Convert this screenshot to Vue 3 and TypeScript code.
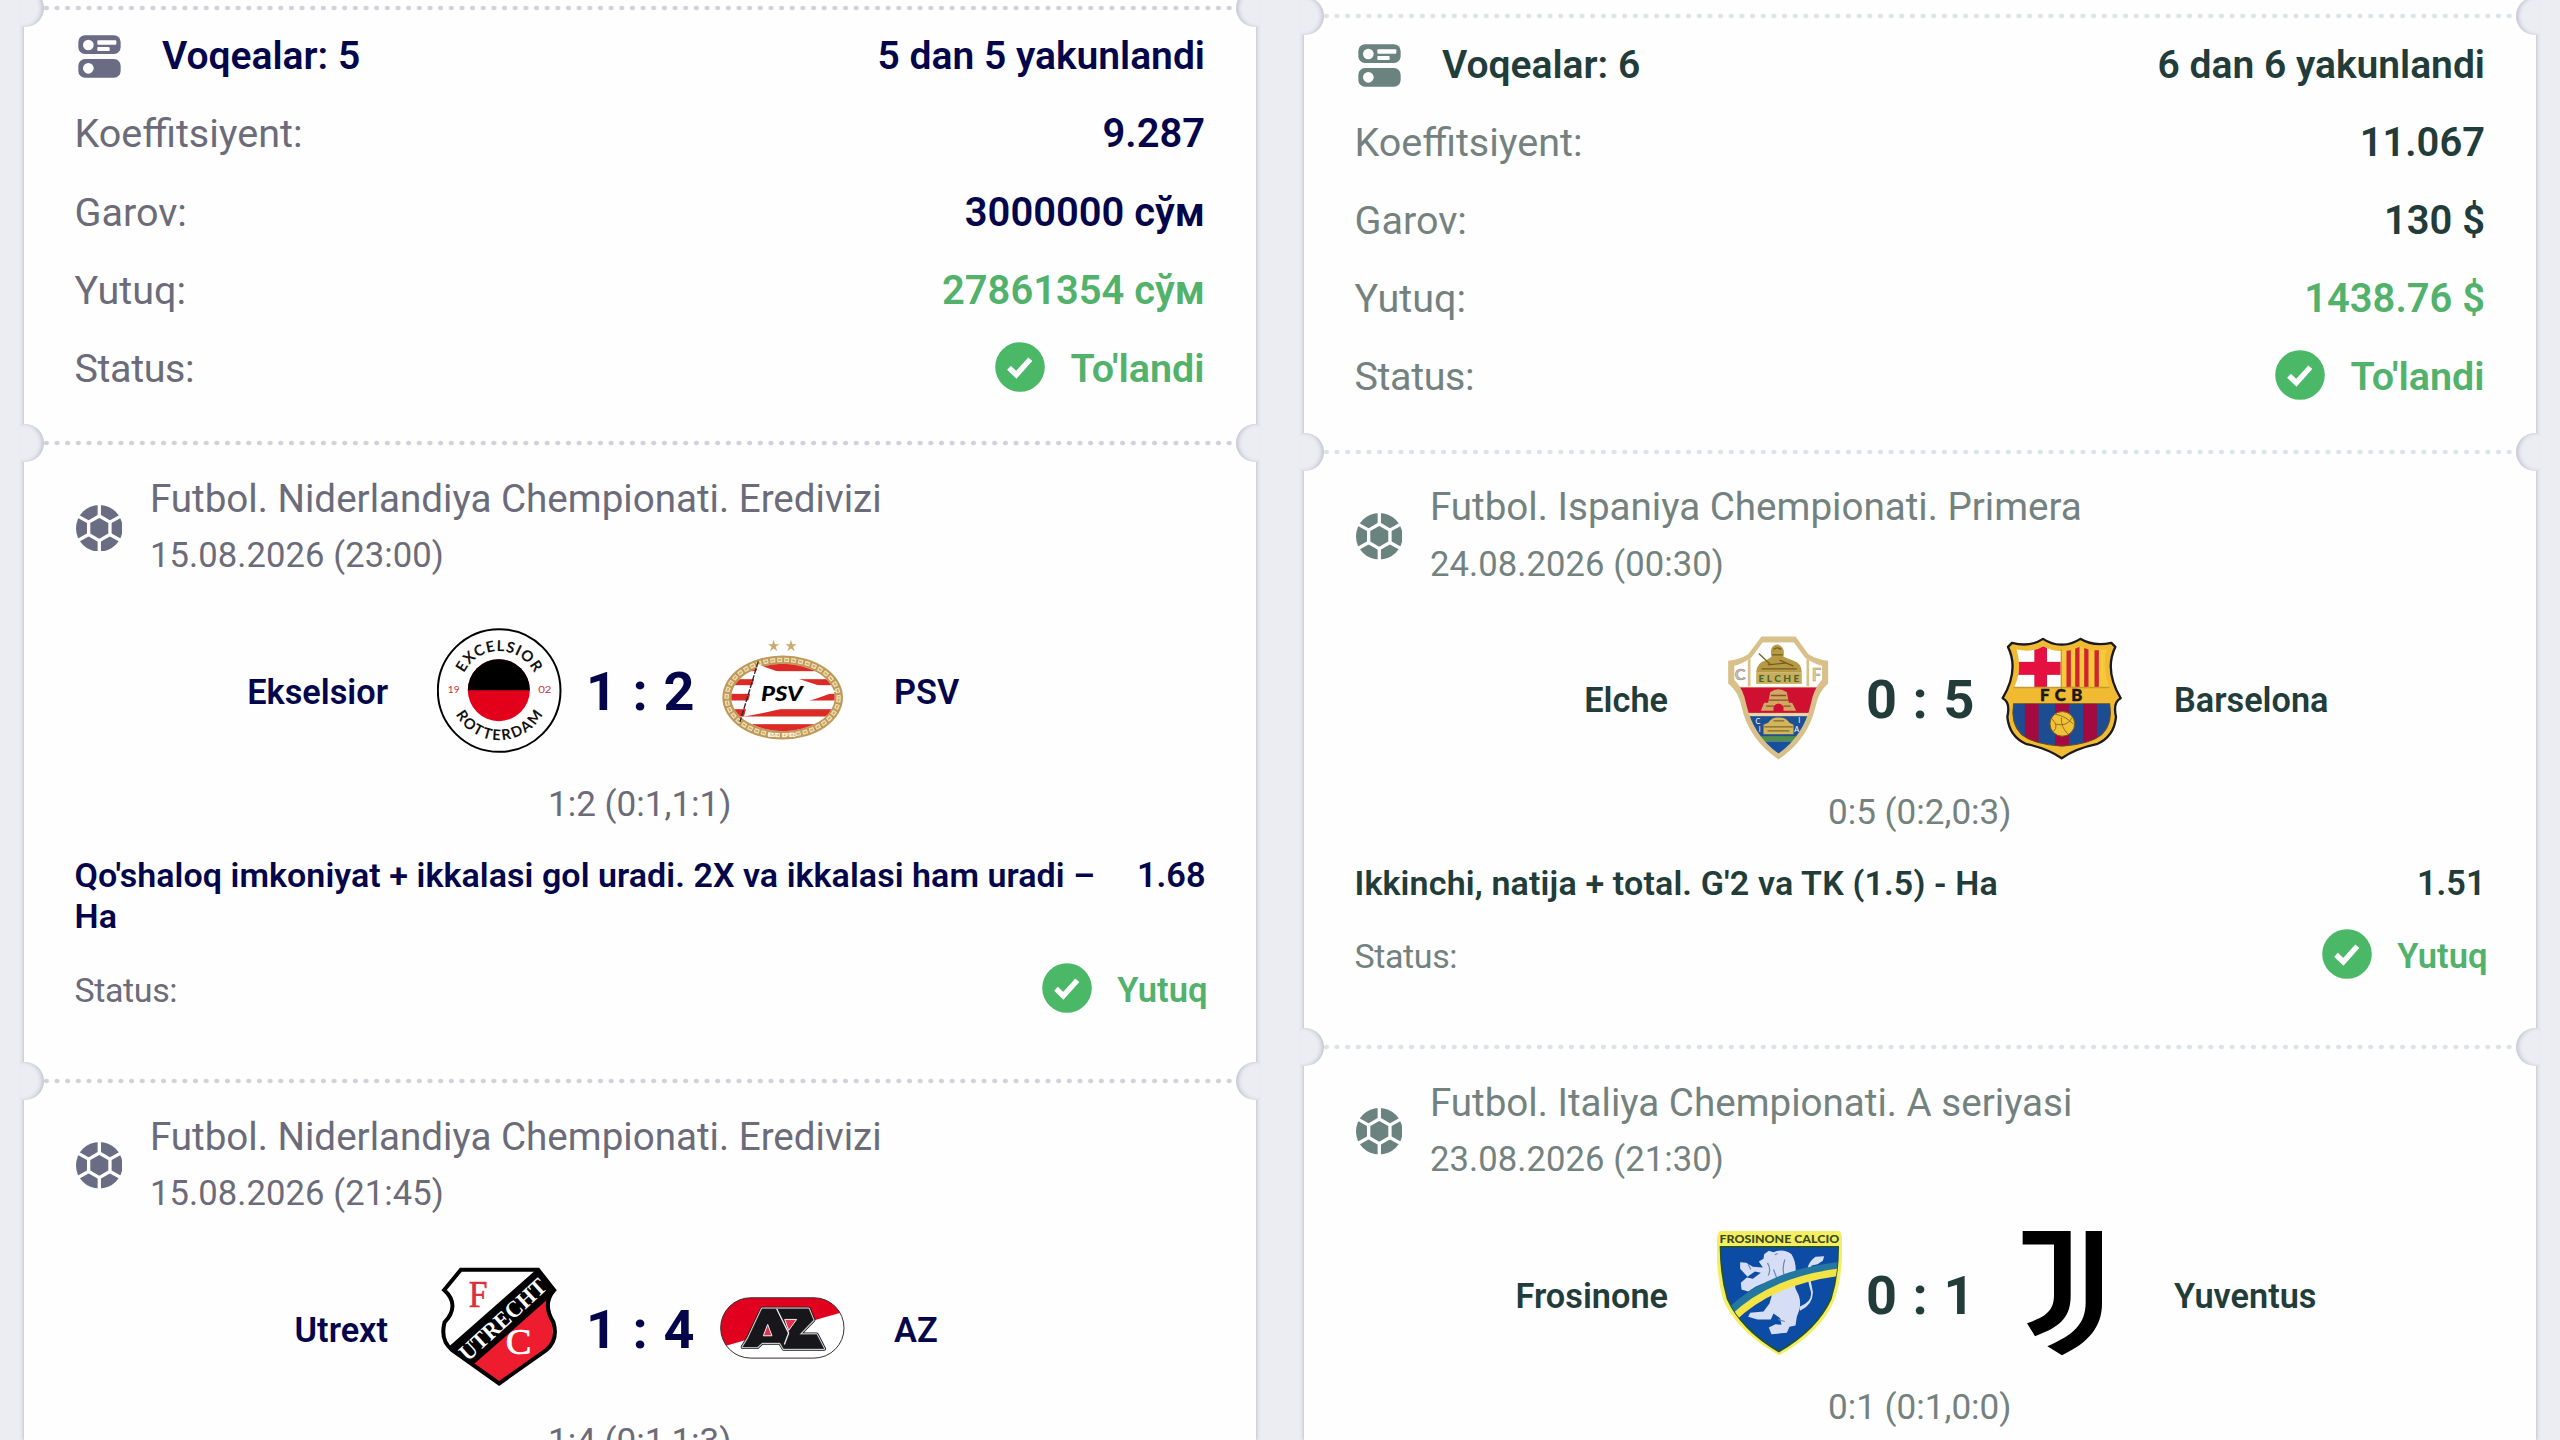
<script setup lang="ts">
type Crest = 'excelsior' | 'psv' | 'utrecht' | 'az' | 'elche' | 'barcelona' | 'frosinone' | 'juventus'

interface Team {
  name: string
  crest: Crest
}

interface Bet {
  league: string
  date: string
  home: Team
  away: Team
  score: string
  periods: string
  market: string
  odds: string
}

interface Slip {
  theme: 'navy' | 'pine'
  count: string
  finished: string
  coefficient: string
  stake: string
  payout: string
  bets: Bet[]
}

const slips: Slip[] = [
  {
    theme: 'navy',
    count: 'Voqealar: 5',
    finished: '5 dan 5 yakunlandi',
    coefficient: '9.287',
    stake: '3000000 сўм',
    payout: '27861354 сўм',
    bets: [
      {
        league: 'Futbol. Niderlandiya Chempionati. Eredivizi',
        date: '15.08.2026 (23:00)',
        home: { name: 'Ekselsior', crest: 'excelsior' },
        away: { name: 'PSV', crest: 'psv' },
        score: '1 : 2',
        periods: '1:2 (0:1,1:1)',
        market: "Qo'shaloq imkoniyat + ikkalasi gol uradi. 2X va ikkalasi ham uradi – Ha",
        odds: '1.68',
      },
      {
        league: 'Futbol. Niderlandiya Chempionati. Eredivizi',
        date: '15.08.2026 (21:45)',
        home: { name: 'Utrext', crest: 'utrecht' },
        away: { name: 'AZ', crest: 'az' },
        score: '1 : 4',
        periods: '1:4 (0:1,1:3)',
        market: '',
        odds: '',
      },
    ],
  },
  {
    theme: 'pine',
    count: 'Voqealar: 6',
    finished: '6 dan 6 yakunlandi',
    coefficient: '11.067',
    stake: '130 $',
    payout: '1438.76 $',
    bets: [
      {
        league: 'Futbol. Ispaniya Chempionati. Primera',
        date: '24.08.2026 (00:30)',
        home: { name: 'Elche', crest: 'elche' },
        away: { name: 'Barselona', crest: 'barcelona' },
        score: '0 : 5',
        periods: '0:5 (0:2,0:3)',
        market: "Ikkinchi, natija + total. G'2 va TK (1.5) - Ha",
        odds: '1.51',
      },
      {
        league: 'Futbol. Italiya Chempionati. A seriyasi',
        date: '23.08.2026 (21:30)',
        home: { name: 'Frosinone', crest: 'frosinone' },
        away: { name: 'Yuventus', crest: 'juventus' },
        score: '0 : 1',
        periods: '0:1 (0:1,0:0)',
        market: '',
        odds: '',
      },
    ],
  },
]

const crestBox: Record<Crest, string> = {
  excelsior: '52.5 52.5 375 375',
  psv: '900 52.5 375 375',
  utrecht: '52.5 77.7 375 375',
  az: '900 77.7 375 375',
  elche: '52.5 77.4 375 375',
  barcelona: '900 77.4 375 375',
  frosinone: '82.5 64.5 375 375',
  juventus: '930 64.5 375 375',
}
</script>

<template>
  <main class="page">
    <section v-for="slip in slips" :key="slip.theme" class="column" :class="slip.theme">
      <div class="card">
        <div class="stub"></div>
        <div class="divider"><i class="notch left"></i><i class="notch right"></i></div>

        <div class="summary">
          <div class="row head">
            <span class="head-title">
              <svg class="events-icon" viewBox="174 131 129 129">
                <rect x="175" y="132" width="127" height="56" rx="20" fill="currentColor" />
                <rect x="175" y="203" width="127" height="56" rx="20" fill="currentColor" />
                <circle cx="205" cy="161" r="16" fill="#fff" />
                <circle cx="205" cy="231" r="16" fill="#fff" />
                <rect x="232" y="147" width="57" height="13" rx="3" fill="#fff" />
                <rect x="232" y="167" width="37" height="12" rx="3" fill="#fff" />
              </svg>
              <b>{{ slip.count }}</b>
            </span>
            <b>{{ slip.finished }}</b>
          </div>
          <div class="row"><span class="label">Koeffitsiyent:</span><b class="value">{{ slip.coefficient }}</b></div>
          <div class="row"><span class="label">Garov:</span><b class="value">{{ slip.stake }}</b></div>
          <div class="row"><span class="label">Yutuq:</span><b class="value won">{{ slip.payout }}</b></div>
          <div class="row">
            <span class="label status">Status:</span>
            <b class="won badge">
              <svg class="check" viewBox="0 0 50 50">
                <circle cx="25" cy="25" r="24.8" fill="currentColor" />
                <path d="M14 25.8 21.3 32.8 35.3 17.2" fill="none" stroke="#fff" stroke-width="5.4" />
              </svg>
              To'landi
            </b>
          </div>
        </div>

        <template v-for="bet in slip.bets" :key="bet.date">
          <div class="divider"><i class="notch left"></i><i class="notch right"></i></div>
          <article class="bet">
            <header class="league">
              <svg class="ball" viewBox="229 254 140 140">
                <circle cx="299" cy="324" r="70" fill="currentColor" />
                <g fill="none" stroke="#fff" stroke-width="10">
                  <path d="M299 287 331 305.5V342.5L299 361 267 342.5V305.5Z" />
                  <path d="M299 287V250M331 305.5 366 286M331 342.5 366 362M299 361V398M267 342.5 232 362M267 305.5 232 286" />
                </g>
              </svg>
              <div>
                <div class="league-name">{{ bet.league }}</div>
                <div class="date">{{ bet.date }}</div>
              </div>
            </header>

            <div class="match">
              <b class="team home">{{ bet.home.name }}</b>
              <template v-for="(team, side) in [bet.home, bet.away]" :key="team.name">
                <b v-if="side === 1" class="score">{{ bet.score }}</b>
                <svg class="crest" :viewBox="crestBox[team.crest]">
                  <g v-if="team.crest === 'excelsior'" class="sans">
                    <defs>
                      <path id="arc-top" d="M121 240A118 118 0 0 1 357 240" />
                      <path id="arc-bottom" d="M90 240A149 149 0 0 0 388 240" />
                    </defs>
                    <circle cx="239" cy="240" r="184" fill="#fff" stroke="#000" stroke-width="6" />
                    <circle cx="238" cy="239" r="93" fill="#e2001a" />
                    <path d="M145 239A93 93 0 0 1 331 239Z" fill="#000" />
                    <text font-size="45" font-weight="700" fill="#111">
                      <textPath href="#arc-top" startOffset="50%" text-anchor="middle" textLength="262">EXCELSIOR</textPath>
                    </text>
                    <text font-size="44" font-weight="700" fill="#111">
                      <textPath href="#arc-bottom" startOffset="50%" text-anchor="middle" textLength="318">ROTTERDAM</textPath>
                    </text>
                    <text x="85" y="248" font-size="27" fill="#c8323c" textLength="35" lengthAdjust="spacingAndGlyphs">19</text>
                    <text x="356" y="248" font-size="27" fill="#c8323c" textLength="40" lengthAdjust="spacingAndGlyphs">02</text>
                  </g>

                  <g v-else-if="team.crest === 'psv'" class="sans">
                    <defs>
                      <clipPath id="psv-oval"><ellipse cx="1089" cy="261" rx="155" ry="101" /></clipPath>
                    </defs>
                    <g fill="#c9ab6c">
                      <path d="M1061 88 1065 101 1078 101 1067 109 1072 122 1061 114 1050 122 1055 109 1044 101 1057 101Z" />
                      <path d="M1113 88 1117 101 1130 101 1119 109 1124 122 1113 114 1102 122 1107 109 1096 101 1109 101Z" />
                    </g>
                    <ellipse cx="1088" cy="261" rx="181" ry="126" fill="#bd9a58" />
                    <ellipse cx="1088" cy="261" rx="168" ry="113" fill="none" stroke="#f0dfb8" stroke-width="13" stroke-dasharray="15 6" />
                    <ellipse cx="1088" cy="261" rx="168" ry="113" fill="none" stroke="#c9a763" stroke-width="5" stroke-dasharray="9 12" stroke-dashoffset="-3" />
                    <ellipse cx="1089" cy="261" rx="155" ry="101" fill="#fff" />
                    <g clip-path="url(#psv-oval)" fill="#dc2a26">
                      <rect x="930" y="158" width="320" height="24" />
                      <rect x="930" y="206" width="320" height="18" />
                      <rect x="930" y="250" width="320" height="20" />
                      <rect x="930" y="296" width="320" height="22" />
                      <rect x="930" y="341" width="320" height="24" />
                    </g>
                    <path d="M1014 162Q1130 205 1250 242Q1110 296 972 318Z" fill="#fff" />
                    <path d="M1015 152 960 334" stroke="#3a2424" stroke-width="4" stroke-dasharray="18 4" />
                    <text x="1023" y="270" font-size="61" font-weight="900" font-style="italic" textLength="125" lengthAdjust="spacingAndGlyphs">PSV</text>
                    <text x="1044" y="380" font-size="19" font-weight="700" fill="#fff" textLength="84">EST. 1913</text>
                  </g>

                  <g v-else-if="team.crest === 'utrecht'">
                    <defs>
                      <clipPath id="utrecht-shield">
                        <path d="M124 91H356L406 153C378 182 386 215 402 250C412 285 405 312 380 333L239 434 98 333C72 312 66 285 75 250C104 215 106 182 72 153Z" />
                      </clipPath>
                    </defs>
                    <path d="M124 91H356L406 153C378 182 380 215 402 250C412 285 405 312 380 333L239 434 98 333C72 312 66 285 75 250C108 215 106 182 72 153Z" fill="#fff" />
                    <g clip-path="url(#utrecht-shield)">
                      <path d="M160 370 400 160V440H160Z" fill="#ed1c2e" />
                      <path d="M85 325 352 90 425 145 160 378Z" fill="#000" />
                    </g>
                    <path d="M124 92H356L404 153C378 182 380 215 402 250C412 285 405 312 380 333L239 433 98 333C72 312 66 285 75 250C108 215 106 182 74 153Z" fill="none" stroke="#000" stroke-width="12" />
                    <text class="serif" x="148" y="204" font-size="116" fill="#d9303c" stroke="#d9303c" stroke-width="2" textLength="56" lengthAdjust="spacingAndGlyphs">F</text>
                    <text class="serif" x="259" y="346" font-size="110" fill="#fff" stroke="#fff" stroke-width="2" textLength="77" lengthAdjust="spacingAndGlyphs">C</text>
                    <text class="serif" transform="translate(145 369) rotate(-42.5)" font-size="70" font-weight="700" fill="#fff" textLength="328" lengthAdjust="spacingAndGlyphs">UTRECHT</text>
                  </g>

                  <g v-else-if="team.crest === 'az'" class="sans">
                    <defs>
                      <clipPath id="az-pill"><rect x="902" y="176" width="370" height="181" rx="90" /></clipPath>
                    </defs>
                    <rect x="902" y="176" width="370" height="181" rx="90" fill="#fff" />
                    <path d="M900 325 1275 217V170H900Z" fill="#e2001f" clip-path="url(#az-pill)" />
                    <rect x="902" y="176" width="370" height="181" rx="90" fill="none" stroke="#3a3032" stroke-width="3" />
                    <g stroke-linejoin="round">
                      <path
                        v-for="pass in 3"
                        :key="pass"
                        d="M1026 209H1166L1180 243 1138 286H1190L1212 329H1091L1080 311H1026L1012 324H968L984 298Z"
                        fill="#17171b"
                        :stroke="['#17171b', '#ddd', '#17171b'][pass - 1]"
                        :stroke-width="[12, 7, 1][pass - 1]"
                      />
                      <path d="M1043 256 1030 290H1056Z" fill="#e5324a" stroke="#eee" stroke-width="3" />
                      <path d="M1094 241H1130L1106 274Z" fill="#e5324a" stroke="#eee" stroke-width="3" />
                      <path d="M1070 209 1106 282 1093 316" fill="none" stroke="#eee" stroke-width="4" />
                    </g>
                  </g>

                  <g v-else-if="team.crest === 'elche'" class="sans">
                    <defs>
                      <clipPath id="elche-shield">
                        <path d="M190 96H283L316 142Q345 162 368 167V208Q342 236 333 285Q312 376 237 430Q162 376 141 285Q132 236 104 208V167Q127 162 156 142Z" />
                      </clipPath>
                    </defs>
                    <path d="M186 79H288L327 132Q352 148 386 152V220Q356 246 348 290Q326 388 237 448Q148 388 126 290Q118 246 86 220V152Q120 148 146 132Z" fill="#d9c08a" />
                    <g clip-path="url(#elche-shield)">
                      <rect x="90" y="80" width="300" height="150" fill="#fff" />
                      <rect x="90" y="232" width="300" height="76" fill="#cf1030" />
                      <rect x="90" y="309" width="300" height="9" fill="#e9d7ac" />
                      <rect x="90" y="318" width="300" height="62" fill="#1d4f94" />
                      <rect x="90" y="378" width="300" height="16" fill="#4f8f4a" />
                      <rect x="90" y="394" width="300" height="60" fill="#174fa0" />
                      <path d="M149 138V228M325 138V228" stroke="#d9c08a" stroke-width="8" />
                    </g>
                    <path d="M170 186Q172 156 200 150L216 140Q208 106 233 103Q258 106 252 140L282 152Q305 158 307 186Z" fill="#b89a45" />
                    <path d="M178 130 212 162M222 118Q233 108 245 118M218 134H250M205 164 262 158M186 176H292M240 150 282 168" stroke="#6f6022" stroke-width="4" fill="none" />
                    <rect x="170" y="186" width="137" height="35" fill="#c9ad5d" />
                    <text x="177" y="215" font-size="30" font-weight="900" fill="#3f6a2c" textLength="122">ELCHE</text>
                    <text x="106" y="210" font-size="48" font-weight="700" fill="#d2c6bb" stroke="#8f8076" stroke-width="1.5" textLength="32" lengthAdjust="spacingAndGlyphs">C</text>
                    <text x="337" y="213" font-size="50" font-weight="700" fill="#e0cfa4" stroke="#a0906c" stroke-width="1.5">F</text>
                    <path d="M184 302 194 278H206L212 246Q236 228 262 246L268 278H278L290 302H252V288Q237 272 222 288V302Z" fill="#d0a862" />
                    <path d="M214 256H260M208 270H266M200 288H222M252 288H274" stroke="#8f4a30" stroke-width="4" />
                    <path d="M192 372V344L206 338Q218 320 237 322Q258 320 270 338L282 344V372Z" fill="#d4b45c" />
                    <path d="M194 350H280M204 362H270M222 332H254" stroke="#7a6a2c" stroke-width="3.5" />
                    <text x="168" y="340" font-size="22" fill="#fff">C</text>
                    <text x="178" y="364" font-size="20" fill="#fff">I</text>
                    <text x="296" y="338" font-size="22" fill="#fff">I</text>
                    <text x="284" y="364" font-size="22" fill="#fff">A</text>
                  </g>

                  <g v-else-if="team.crest === 'barcelona'" class="sans">
                    <defs>
                      <clipPath id="barca-top">
                        <path d="M950 118Q1000 128 1030 108Q1058 124 1085 122Q1112 124 1142 108Q1170 126 1220 118Q1206 170 1228 232H942Q968 180 950 118Z" />
                      </clipPath>
                      <clipPath id="barca-bottom">
                        <path d="M941 280H1229Q1240 340 1205 374Q1170 402 1085 408Q1000 402 965 374Q930 340 941 280Z" />
                      </clipPath>
                    </defs>
                    <path d="M936 98Q990 112 1029 86Q1056 104 1085 103Q1114 104 1141 86Q1180 110 1234 98L1246 110Q1212 180 1262 264Q1238 276 1248 320Q1242 380 1190 402Q1130 414 1085 444Q1040 414 980 402Q928 380 922 320Q932 276 908 264Q958 180 924 110Z"
                      fill="#f0bb33" stroke="#1c1a1a" stroke-width="7" stroke-linejoin="round" />
                    <g clip-path="url(#barca-top)">
                      <rect x="940" y="100" width="145" height="132" fill="#fff" />
                      <rect x="1003" y="100" width="38" height="132" fill="#e4103f" />
                      <rect x="940" y="155" width="142" height="39" fill="#e4103f" />
                      <rect x="1084" y="100" width="150" height="132" fill="#f6c83c" />
                      <path d="M1106 100V232M1132 100V232M1159 100V232M1190 100V232" stroke="#d0252f" stroke-width="13" />
                    </g>
                    <path d="M1084 118V232M941 232H1228" stroke="#c79a2c" stroke-width="4" />
                    <path d="M940 281H1230" stroke="#54401c" stroke-width="3" />
                    <g clip-path="url(#barca-bottom)">
                      <rect x="930" y="280" width="310" height="135" fill="#1d4c93" />
                      <path d="M995 280V415M1086 280V415M1170 280V415" stroke="#a4093f" stroke-width="41" />
                    </g>
                    <path d="M941 280Q930 340 965 374Q1000 402 1085 408Q1170 402 1205 374Q1240 340 1229 280" fill="none" stroke="#6b4c1a" stroke-width="3" />
                    <circle cx="1087" cy="341" r="37" fill="#efc239" stroke="#7e5c18" stroke-width="3" />
                    <path d="M1056 326Q1078 348 1060 364M1066 312Q1098 318 1120 342M1084 322Q1082 350 1104 372M1116 322Q1104 350 1066 342" fill="none" stroke="#86631c" stroke-width="2.5" />
                    <text x="1020" y="271" font-size="50" font-weight="900" fill="#1c1818" stroke="#1c1818" stroke-width="1.5" textLength="127">FCB</text>
                  </g>

                  <g v-else-if="team.crest === 'frosinone'" class="sans">
                    <defs>
                      <clipPath id="frosinone-shield">
                        <path d="M93 112H446Q446 200 424 268Q382 360 268 426Q156 360 114 268Q94 200 93 112Z" />
                      </clipPath>
                    </defs>
                    <path d="M104 58H434Q462 62 458 100Q460 210 432 278Q390 370 269 437Q148 370 104 278Q80 210 82 100Q80 62 104 58Z" fill="#f4ee62" />
                    <path d="M93 112H446Q446 200 424 268Q382 360 268 426Q156 360 114 268Q94 200 93 112Z" fill="#0d4ca5" stroke="#25532d" stroke-width="5" />
                    <path d="M252 128Q282 116 306 134Q322 160 318 196Q312 230 322 246Q336 268 330 300L322 322 318 348 300 352 292 370 246 374 238 354 258 344 276 346 272 326 252 312 244 330 204 330 176 322 182 310 222 306 240 282 252 240 220 222 198 232 176 246 156 240 154 220 172 204 190 208 214 190 196 186 174 202 152 178 152 158 170 160 190 172 220 174 208 156 222 148 224 134 238 124Z" fill="#d5def5" />
                    <path d="M330 292Q370 276 364 246Q352 206 354 178Q356 158 378 142L404 140 400 154 384 164 366 168 362 206 370 246Q372 284 332 304Z" fill="#d5def5" />
                    <path d="M256 136 264 132M234 160Q246 180 236 198M286 150Q276 180 286 202M252 180 262 206M176 164 184 180M266 330 286 336" fill="none" stroke="#7083ae" stroke-width="3.5" />
                    <g clip-path="url(#frosinone-shield)" fill="none">
                      <path d="M120 308Q240 190 460 168" stroke="#2478a0" stroke-width="24" />
                      <path d="M128 328Q250 210 460 187" stroke="#f4e345" stroke-width="22" />
                    </g>
                    <text x="90" y="101" font-size="35" font-weight="900" fill="#3c4b22" textLength="359" lengthAdjust="spacingAndGlyphs">FROSINONE CALCIO</text>
                  </g>

                  <g v-else fill="#000">
                    <path d="M998 63H1142V258C1142 318 1118 350 1035 380L1011 341C1070 322 1092 302 1092 256V105H998Z" />
                    <path d="M1187 63H1236V282C1236 352 1196 400 1116 437L1072 410C1150 376 1187 344 1187 278Z" />
                  </g>
                </svg>
              </template>
              <b class="team away">{{ bet.away.name }}</b>
            </div>

            <div class="periods">{{ bet.periods }}</div>

            <template v-if="bet.market">
              <div class="market">
                <b class="market-name">{{ bet.market }}</b>
                <b class="odds">{{ bet.odds }}</b>
              </div>
              <div class="result">
                <span class="status">Status:</span>
                <b class="won badge">
                  <svg class="check" viewBox="0 0 50 50">
                    <circle cx="25" cy="25" r="24.8" fill="currentColor" />
                    <path d="M14 25.8 21.3 32.8 35.3 17.2" fill="none" stroke="#fff" stroke-width="5.4" />
                  </svg>
                  Yutuq
                </b>
              </div>
            </template>
          </article>
        </template>
      </div>
    </section>
  </main>
</template>

<style>
body {
  overflow: hidden;
  background: #ebedf3;
}
</style>

<style scoped>
.page {
  display: flex;
  height: 1440px;
  overflow: hidden;
  background: #ebedf3;
  font-family: Roboto, "Liberation Sans", sans-serif;
}

.column {
  box-sizing: border-box;
  width: 1280px;
  height: 1440px;
  padding: 0 24px;
}

.navy {
  --strong: #04054a;
  --muted: #6b6b79;
  --icon: #6a6c84;
  --dot: #d0d1db;
  --won: #52b26c;
  --lead: 7.7px;
}

.pine {
  --strong: #223c3a;
  --muted: #74827f;
  --icon: #6b837e;
  --dot: #dbe3e6;
  --won: #52b26c;
  --lead: 16px;
}

.card {
  height: 1440px;
  background: #fefefe;
  box-shadow: 0 0 4px rgba(70, 72, 90, 0.42);
  color: var(--strong);
}

b {
  font-weight: 600;
}

.stub {
  height: var(--lead);
}

.divider {
  position: relative;
  height: 6px;
  margin: -3px 17px -3px;
  background: radial-gradient(ellipse 3px 2.7px at 50% 50%, var(--dot) 70%, transparent 100%) 0 0 / 10.667px 6px repeat-x;
}

.notch {
  position: absolute;
  top: -16px;
  width: 24px;
  height: 38px;
  background: #ebedf3;
}

.notch.left {
  left: -21px;
  border-radius: 0 19px 19px 0;
  box-shadow: inset -3px 0 4px -1px rgba(80, 80, 100, 0.28);
}

.notch.right {
  right: -21px;
  border-radius: 19px 0 0 19px;
  box-shadow: inset 3px 0 4px -1px rgba(80, 80, 100, 0.28);
}

.summary {
  padding: 9.5px 51px 35.1px 50.5px;
}

.row {
  display: flex;
  align-items: center;
  justify-content: space-between;
  height: 78.2px;
  font-size: 39.5px;
  line-height: 52px;
}

.head {
  font-size: 39px;
}

.head-title {
  display: flex;
  align-items: center;
  gap: 41px;
  padding-left: 3.5px;
}

.events-icon {
  width: 43px;
  height: 43px;
  margin-top: 1px;
  color: var(--icon);
}

.label,
.result {
  color: var(--muted);
}

.status {
  letter-spacing: -0.4px;
}

.value {
  font-size: 39.9px;
  line-height: 54px;
}

.won {
  color: var(--won);
}

.badge {
  display: flex;
  align-items: center;
  gap: 25px;
}

.row .badge {
  margin-right: 0.5px;
}

.check {
  width: 50px;
  height: 50px;
  margin-top: -5px;
  color: #4bb868;
}

.bet {
  padding: 27.6px 49px 66px 50.5px;
}

.league {
  display: flex;
  align-items: center;
  gap: 27.5px;
  color: var(--muted);
}

.ball {
  width: 46.6px;
  height: 46.6px;
  margin-left: 1.3px;
  margin-top: 1px;
  color: var(--icon);
}

.league-name {
  font-size: 38.6px;
  line-height: 56.6px;
}

.date {
  font-size: 34.6px;
  line-height: 56.6px;
  letter-spacing: 0.1px;
}

.match {
  display: grid;
  grid-template-columns: 1fr 125px 157.5px 125px 1fr;
  align-items: center;
  margin-top: 43.6px;
}

.crest {
  display: block;
  width: 125px;
  height: 125px;
}

.team {
  padding-top: 4px;
  font-size: 34.3px;
  line-height: 42px;
}

.home {
  padding-right: 49px;
  text-align: right;
}

.away {
  padding-left: 49.5px;
}

.score {
  padding-top: 4px;
  font-size: 54px;
  font-weight: 700;
  line-height: 64px;
  letter-spacing: 1.1px;
  text-align: center;
}

.periods {
  margin: 31px 2px 0 0;
  color: var(--muted);
  font-size: 35.1px;
  line-height: 40px;
  text-align: center;
}

.market {
  display: flex;
  justify-content: space-between;
  gap: 40px;
  margin-top: 31px;
  font-size: 34px;
  line-height: 41px;
}

.market-name {
  width: 1030px;
  letter-spacing: 0.06px;
}

.pine .market-name {
  letter-spacing: 0.15px;
}

.odds {
  margin-right: 1.5px;
  font-size: 34.3px;
}

.result {
  display: flex;
  align-items: center;
  justify-content: space-between;
  height: 50px;
  margin-top: 28.5px;
  font-size: 34px;
}

.result .badge {
  margin-right: -0.5px;
  font-size: 34.6px;
}

.result .check {
  margin-top: -4px;
}

.pine .result {
  margin-top: 27px;
}

.sans {
  font-family: Lato, "Open Sans", sans-serif;
}

.serif {
  font-family: "Liberation Serif", serif;
}
</style>
